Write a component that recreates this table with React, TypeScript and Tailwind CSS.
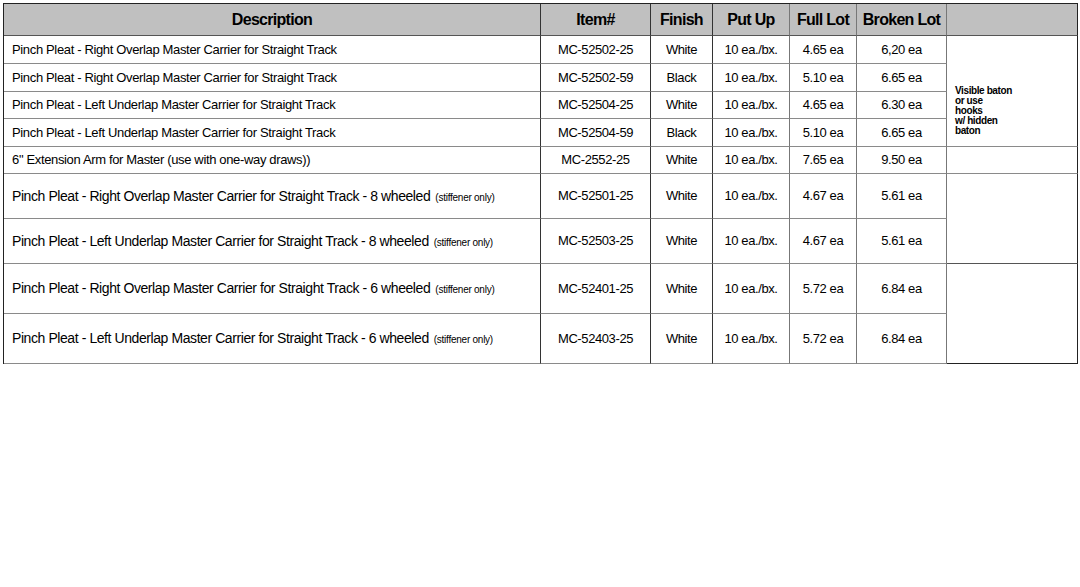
import React from "react";

type Row = {
  desc: string;
  note?: string;
  item: string;
  finish: string;
  putUp: string;
  full: string;
  broken: string;
  big?: boolean;
};

const rows: Row[] = [
  { desc: "Pinch Pleat - Right Overlap Master Carrier for Straight Track", item: "MC-52502-25", finish: "White", putUp: "10 ea./bx.", full: "4.65 ea", broken: "6,20 ea" },
  { desc: "Pinch Pleat - Right Overlap Master Carrier for Straight Track", item: "MC-52502-59", finish: "Black", putUp: "10 ea./bx.", full: "5.10 ea", broken: "6.65 ea" },
  { desc: "Pinch Pleat - Left Underlap Master Carrier for Straight Track", item: "MC-52504-25", finish: "White", putUp: "10 ea./bx.", full: "4.65 ea", broken: "6.30 ea" },
  { desc: "Pinch Pleat - Left Underlap Master Carrier for Straight Track", item: "MC-52504-59", finish: "Black", putUp: "10 ea./bx.", full: "5.10 ea", broken: "6.65 ea" },
  { desc: "6\" Extension Arm for Master (use with one-way draws))", item: "MC-2552-25", finish: "White", putUp: "10 ea./bx.", full: "7.65 ea", broken: "9.50 ea" },
  { desc: "Pinch Pleat - Right Overlap Master Carrier for Straight Track - 8 wheeled", note: "(stiffener only)", item: "MC-52501-25", finish: "White", putUp: "10 ea./bx.", full: "4.67 ea", broken: "5.61 ea", big: true },
  { desc: "Pinch Pleat - Left Underlap Master Carrier for Straight Track - 8 wheeled", note: "(stiffener only)", item: "MC-52503-25", finish: "White", putUp: "10 ea./bx.", full: "4.67 ea", broken: "5.61 ea", big: true },
  { desc: "Pinch Pleat - Right Overlap Master Carrier for Straight Track - 6 wheeled", note: "(stiffener only)", item: "MC-52401-25", finish: "White", putUp: "10 ea./bx.", full: "5.72 ea", broken: "6.84 ea", big: true },
  { desc: "Pinch Pleat - Left Underlap Master Carrier for Straight Track - 6 wheeled", note: "(stiffener only)", item: "MC-52403-25", finish: "White", putUp: "10 ea./bx.", full: "5.72 ea", broken: "6.84 ea", big: true },
];

const head = "flex items-center justify-center bg-[#c0c0c0] border-b border-b-[#555] font-bold text-[16px] tracking-[-0.7px]";
const cell = "flex items-center justify-center border-b border-b-[#8a8a8a] text-[13px] tracking-[-0.4px]";

const App = () => {
  return (
    <div className="w-[1080px] h-[587px] bg-white pt-[3px] pl-[3px] text-black" style={{ fontFamily: '"Liberation Sans", Arial, sans-serif' }}>
      <div className="grid w-[1075px] grid-cols-[537px_110px_62px_77px_67px_90px_131px] grid-rows-[32px_28px_28px_27px_28px_27px_45px_45px_50px_50px] border-l border-t border-l-[#222] border-t-[#222]">
        {/* Header */}
        <div className={`${head} border-r border-r-[#333]`}>Description</div>
        <div className={`${head} border-r border-r-[#333]`}>Item#</div>
        <div className={`${head} border-r border-r-[#333]`}>Finish</div>
        <div className={`${head} border-r border-r-[#777]`}>Put Up</div>
        <div className={`${head} border-r border-r-[#777]`}>Full Lot</div>
        <div className={`${head} border-r border-r-[#777]`}>Broken Lot</div>
        <div className={`${head} border-r border-r-[#222]`}></div>

        {rows.map((r, i) => (
          <React.Fragment key={i}>
            <div
              className={`flex items-center justify-start pl-[8px] border-b border-b-[#8a8a8a] border-r border-r-[#333] whitespace-nowrap ${
                r.big ? "text-[14px] tracking-[-0.42px]" : "text-[13px] tracking-[-0.35px]"
              }`}
              style={{ gridColumn: 1, gridRow: i + 2 }}
            >
              <span>
                {r.desc}
                {r.note && <span className="ml-[5px] text-[10px] tracking-[-0.25px]">{r.note}</span>}
              </span>
            </div>
            <div className={`${cell} border-r border-r-[#333]`} style={{ gridColumn: 2, gridRow: i + 2 }}>{r.item}</div>
            <div className={`${cell} border-r border-r-[#333]`} style={{ gridColumn: 3, gridRow: i + 2 }}>{r.finish}</div>
            <div className={`${cell} border-r border-r-[#777]`} style={{ gridColumn: 4, gridRow: i + 2 }}>{r.putUp}</div>
            <div className={`${cell} border-r border-r-[#777]`} style={{ gridColumn: 5, gridRow: i + 2 }}>{r.full}</div>
            <div className={`${cell} border-r border-r-[#777]`} style={{ gridColumn: 6, gridRow: i + 2 }}>{r.broken}</div>
          </React.Fragment>
        ))}

        {/* Notes column, merged cells */}
        <div className="col-start-7 row-start-2 row-span-4 border-r border-r-[#222] border-b border-b-[#8a8a8a] pl-[8px] pt-[50px] text-[10px] leading-[10px] font-bold tracking-[-0.4px]">
          Visible baton
          <br />
          or use
          <br />
          hooks
          <br />
          w/ hidden
          <br />
          baton
        </div>
        <div className="col-start-7 row-start-6 border-r border-r-[#222] border-b border-b-[#8a8a8a]"></div>
        <div className="col-start-7 row-start-7 row-span-2 border-r border-r-[#222] border-b border-b-[#555]"></div>
        <div className="col-start-7 row-start-9 row-span-2 border-r border-r-[#222] border-b border-b-[#222]"></div>
      </div>
    </div>
  );
};

export default App;
